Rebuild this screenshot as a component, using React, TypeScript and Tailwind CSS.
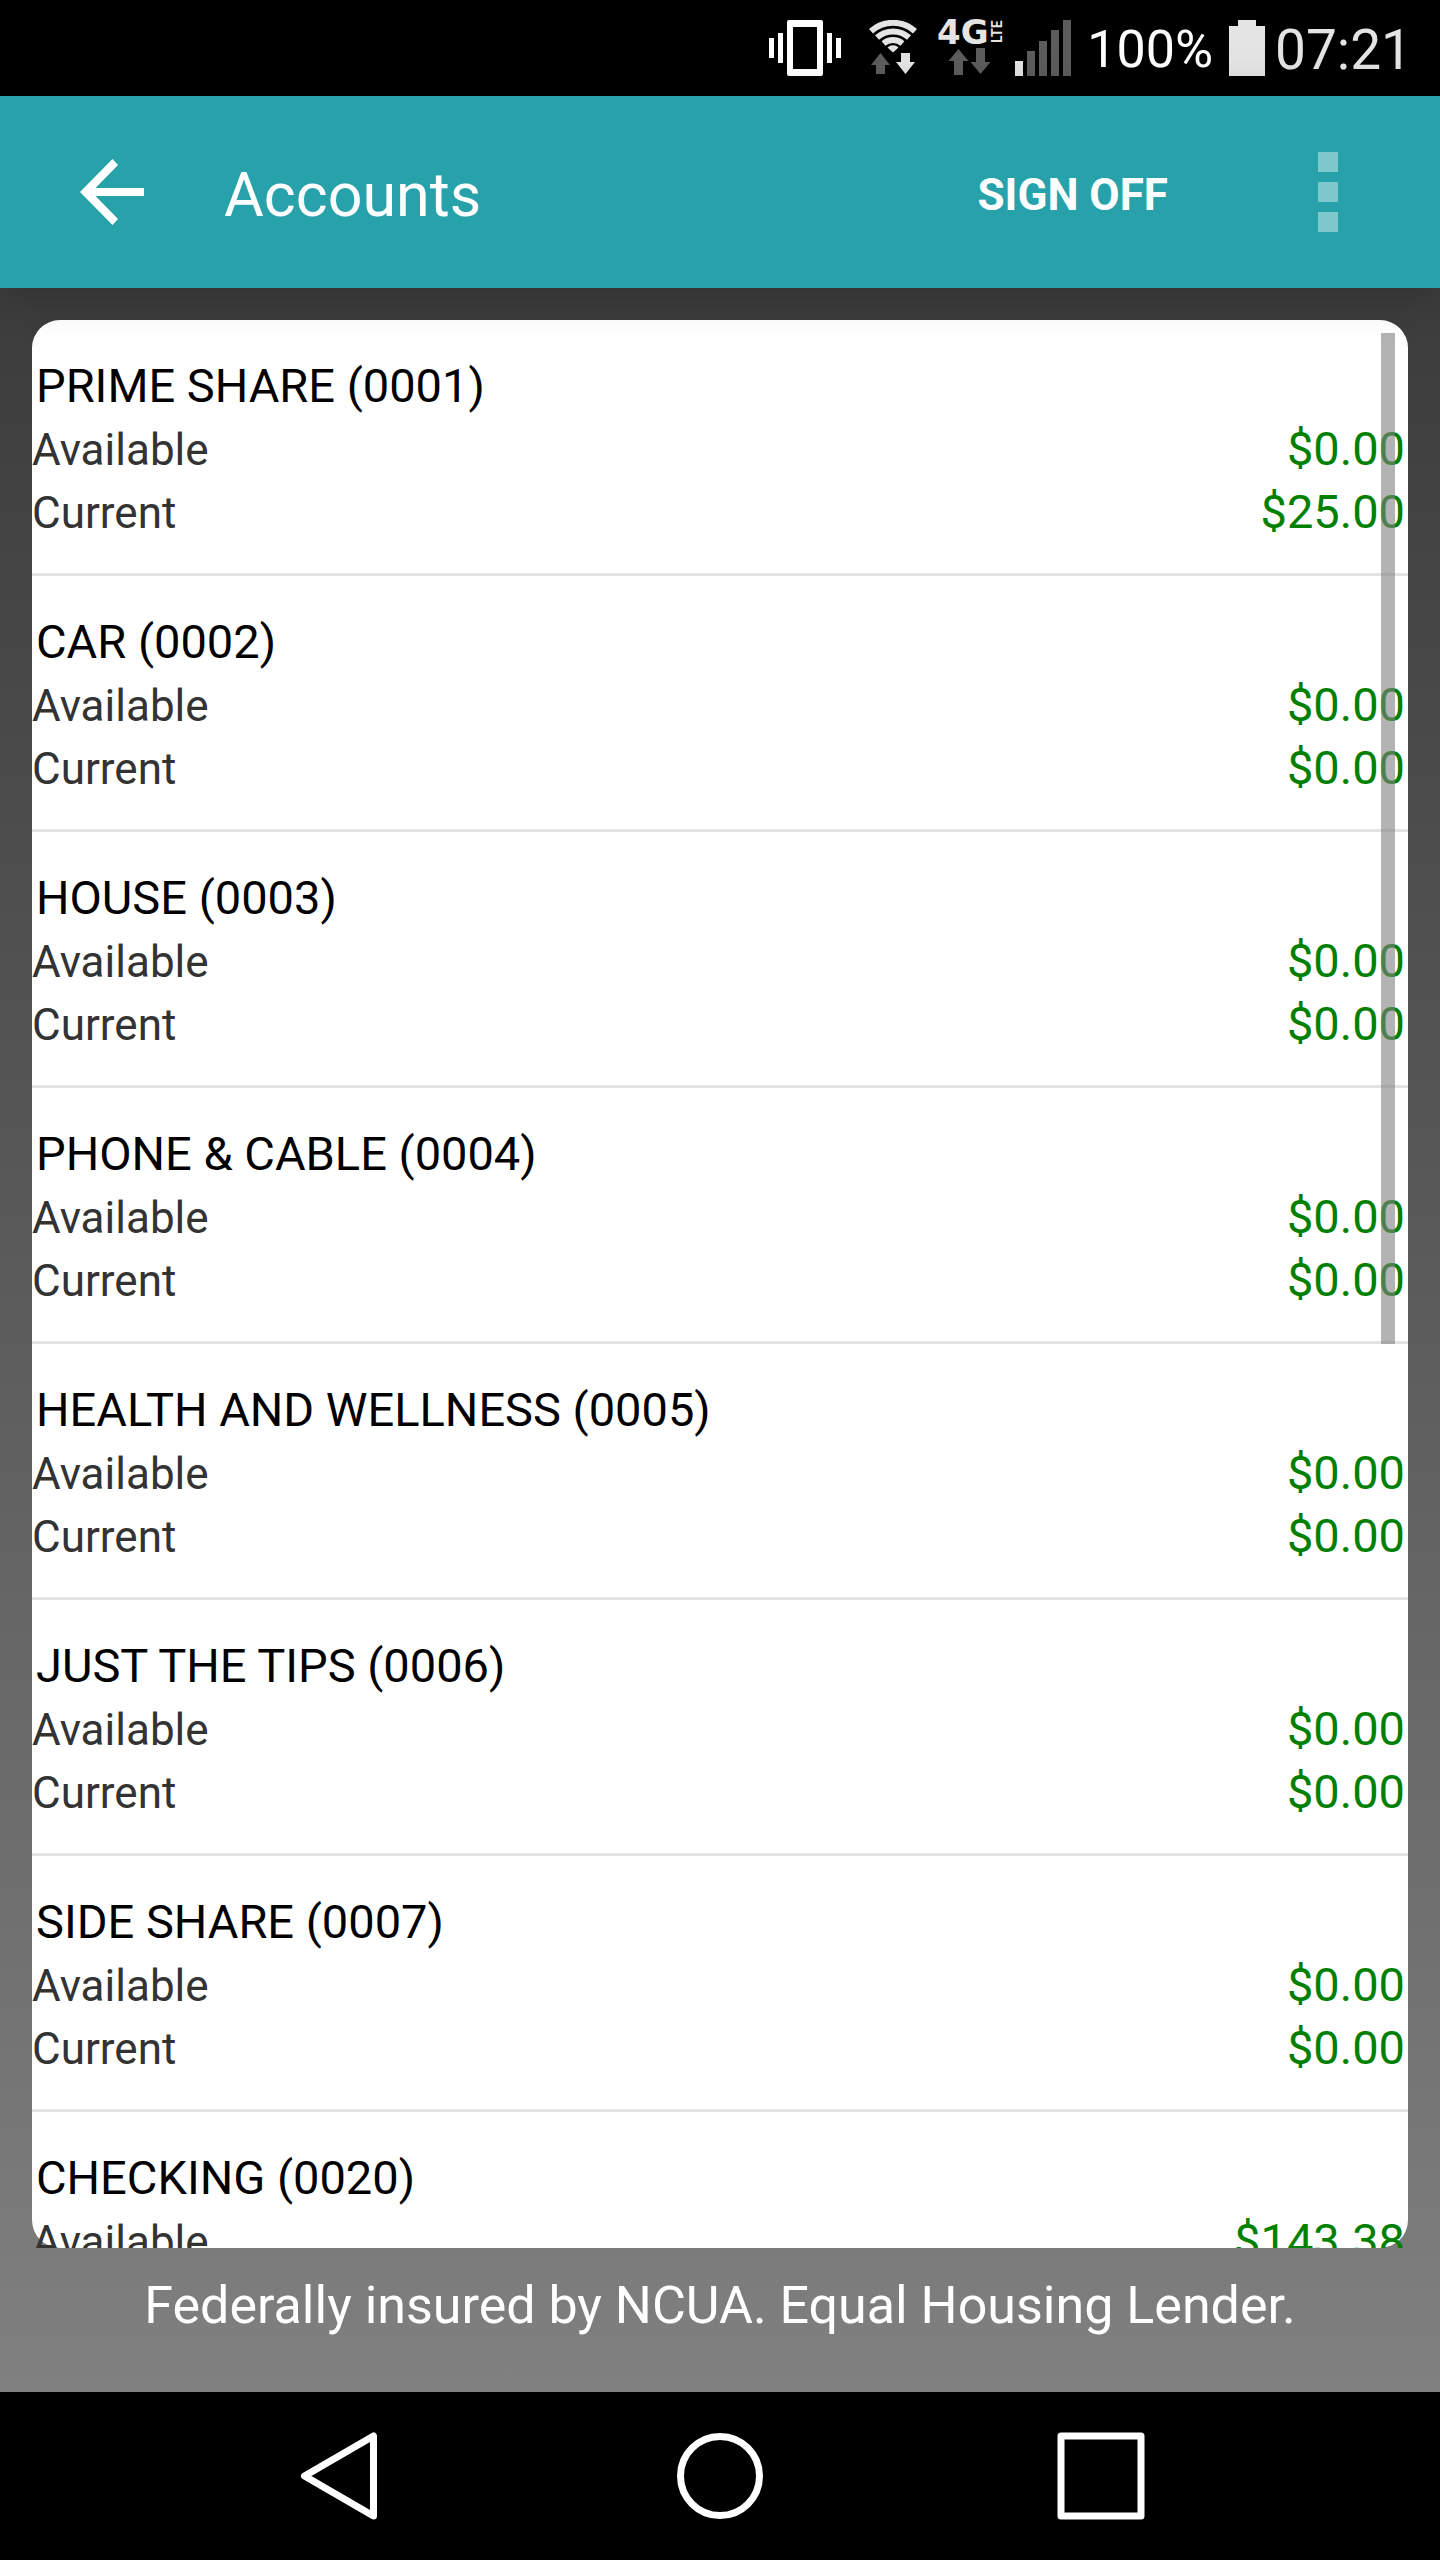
import React from "react";

interface Account {
  name: string;
  number: string;
  available: string;
  current: string;
}

const ACCOUNTS: Account[] = [
  { name: "PRIME SHARE", number: "0001", available: "$0.00", current: "$25.00" },
  { name: "CAR", number: "0002", available: "$0.00", current: "$0.00" },
  { name: "HOUSE", number: "0003", available: "$0.00", current: "$0.00" },
  { name: "PHONE & CABLE", number: "0004", available: "$0.00", current: "$0.00" },
  { name: "HEALTH AND WELLNESS", number: "0005", available: "$0.00", current: "$0.00" },
  { name: "JUST THE TIPS", number: "0006", available: "$0.00", current: "$0.00" },
  { name: "SIDE SHARE", number: "0007", available: "$0.00", current: "$0.00" },
  { name: "CHECKING", number: "0020", available: "$143.38", current: "$143.38" },
];

const VibrateIcon = () => (
  <svg width="72" height="56" viewBox="0 0 72 56" fill="#fff" aria-hidden="true">
    <path d="M0 18h5v20H0zM9 13h5v30H9zM58 13h5v30h-5zM67 18h5v20h-5z" />
    <path
      fillRule="evenodd"
      d="M20 0h32a2 2 0 0 1 2 2v52a2 2 0 0 1-2 2H20a2 2 0 0 1-2-2V2a2 2 0 0 1 2-2zM24 7v42h24V7z"
    />
  </svg>
);

const WifiIcon = () => (
  <svg width="48" height="56" viewBox="0 0 48 56" aria-hidden="true">
    <g fill="none" stroke="#e4e4e4" strokeWidth="6">
      <path d="M2 11.200a33 33 0 0 1 44 0" />
      <path d="M8 17.500a24 24 0 0 1 32 0" />
      <path d="M14.500 23.500a15 15 0 0 1 19 0" />
    </g>
    <path d="M18.500 27.500a8 8 0 0 1 11 0L24 32.500z" fill="#e4e4e4" />
    <path d="M11.500 33L21 45h-5v9H7v-9H2z" fill="#5c5c5c" />
    <path d="M32 33h9v9h5L36.500 54 27 42h5z" fill="#e4e4e4" />
  </svg>
);

const NetworkIcon = () => (
  <svg width="66" height="56" viewBox="0 0 66 56" className="overflow-visible" aria-hidden="true">
    <text
      x="0"
      y="24"
      fill="#e4e4e4"
      className="font-['DejaVu_Sans',sans-serif] text-[34px] font-bold"
    >
      4G
    </text>
    <text
      transform="translate(65 23) rotate(-90)"
      fill="#e4e4e4"
      className="font-[Roboto,sans-serif] text-[14px] font-bold"
    >
      LTE
    </text>
    <path d="M21.500 29L31.500 41H26v14h-9V41h-5.500zM39 28h9v14h5.500L43.500 54 33.500 42H39z" fill="#5c5c5c" />
  </svg>
);

const SignalIcon = () => (
  <svg width="56" height="56" viewBox="0 0 56 56" aria-hidden="true">
    <path d="M0 41h8v15H0z" fill="#e4e4e4" />
    <path d="M12 31h8v25h-8zM24 21h8v35h-8zM36 10h8v46h-8zM48 0h8v56h-8z" fill="#5c5c5c" />
  </svg>
);

const BatteryIcon = () => (
  <svg width="36" height="56" viewBox="0 0 36 56" aria-hidden="true">
    <path d="M9 0h18v6h9v50H0V6h9z" fill="#e4e4e4" />
  </svg>
);

const StatusBar = () => (
  <div className="flex h-24 shrink-0 items-center justify-end bg-black pr-7 text-white">
    <div className="flex items-center gap-7">
      <VibrateIcon />
      <WifiIcon />
    </div>
    <div className="ml-5 flex items-center gap-3">
      <NetworkIcon />
      <SignalIcon />
    </div>
    <span className="ml-4 pt-1 text-[52px] leading-[60px]">100%</span>
    <div className="ml-4 flex items-center gap-2.5">
      <BatteryIcon />
      <span className="pt-1 text-[55px] leading-[60px] text-[#e4e4e4]">07:21</span>
    </div>
  </div>
);

const AppBar = () => (
  <header className="relative z-10 flex h-48 shrink-0 items-center bg-[#27a2ab] pl-20 pr-[102px] text-white shadow-[0_4px_44px_rgba(0,0,0,0.22)]">
    <button type="button" aria-label="Back">
      <svg width="64" height="66" viewBox="0 0 64 66" fill="#fff">
        <path d="M32.500 0L38 6 15.500 29H64v8H15.500L38 60l-5.500 6L0 33z" />
      </svg>
    </button>
    <h1 className="ml-20 pt-1.5 text-[61px] leading-[72px]">Accounts</h1>
    <button type="button" className="ml-auto pt-1.5 text-[44px] leading-[52px] font-bold">
      SIGN OFF
    </button>
    <button type="button" aria-label="More options" className="ml-[150px] flex flex-col gap-2.5">
      <span className="size-5 bg-[#7dc7cd]" />
      <span className="size-5 bg-[#7dc7cd]" />
      <span className="size-5 bg-[#7dc7cd]" />
    </button>
  </header>
);

const BalanceRow: React.FC<{ label: string; amount: string }> = ({ label, amount }) => (
  <div className="flex h-[63px] items-baseline justify-between pr-[3px] leading-[62px]">
    <dt className="text-[44px] text-[#333]">{label}</dt>
    <dd className="text-[47px] text-[#008000]">{amount}</dd>
  </div>
);

const AccountItem: React.FC<{ account: Account }> = ({ account }) => (
  <li className="border-b-3 border-[#e4e4e4] pt-[34px] pb-[29px]">
    <h2 className="pl-1 text-[47px] leading-[64px] text-black">
      {account.name} ({account.number})
    </h2>
    <dl>
      <BalanceRow label="Available" amount={account.available} />
      <BalanceRow label="Current" amount={account.current} />
    </dl>
  </li>
);

const NavBar = () => (
  <nav className="grid h-[168px] shrink-0 grid-cols-3 bg-black px-[148px]">
    <button type="button" aria-label="Back" className="flex items-center justify-center">
      <svg width="88" height="88" viewBox="0 0 88 88" fill="none" stroke="#fff" strokeWidth="7">
        <path d="M9.500 44L78.500 4v80z" strokeLinejoin="round" />
      </svg>
    </button>
    <button type="button" aria-label="Home" className="flex items-center justify-center">
      <svg width="88" height="88" viewBox="0 0 88 88" fill="none" stroke="#fff" strokeWidth="7">
        <circle cx="44" cy="44" r="39.500" />
      </svg>
    </button>
    <button type="button" aria-label="Recent apps" className="flex items-center justify-center">
      <svg width="88" height="88" viewBox="0 0 88 88" fill="none" stroke="#fff" strokeWidth="7">
        <rect x="4" y="4" width="80" height="80" strokeLinejoin="round" />
      </svg>
    </button>
  </nav>
);

const App: React.FC = () => {
  return (
    <div className="flex h-screen flex-col font-[Roboto,sans-serif]">
      <StatusBar />
      <AppBar />

      <main className="flex min-h-0 flex-1 flex-col bg-linear-to-b from-[#3c3c3c] to-[#808080] px-8 pt-8">
        <section className="relative min-h-0 flex-1 rounded-[28px] bg-white">
          <ul className="h-full overflow-y-auto [scrollbar-width:none]">
            {ACCOUNTS.map((account) => (
              <AccountItem key={account.number} account={account} />
            ))}
          </ul>
          {/* scroll indicator */}
          <div className="absolute top-[13px] right-[13px] h-[1011px] w-3.5 bg-[#808080]/60" />
        </section>
        <p className="pt-[26px] pb-[54px] text-center text-[52px] leading-[64px] text-white">
          Federally insured by NCUA. Equal Housing Lender.
        </p>
      </main>

      <NavBar />
    </div>
  );
};

export default App;
